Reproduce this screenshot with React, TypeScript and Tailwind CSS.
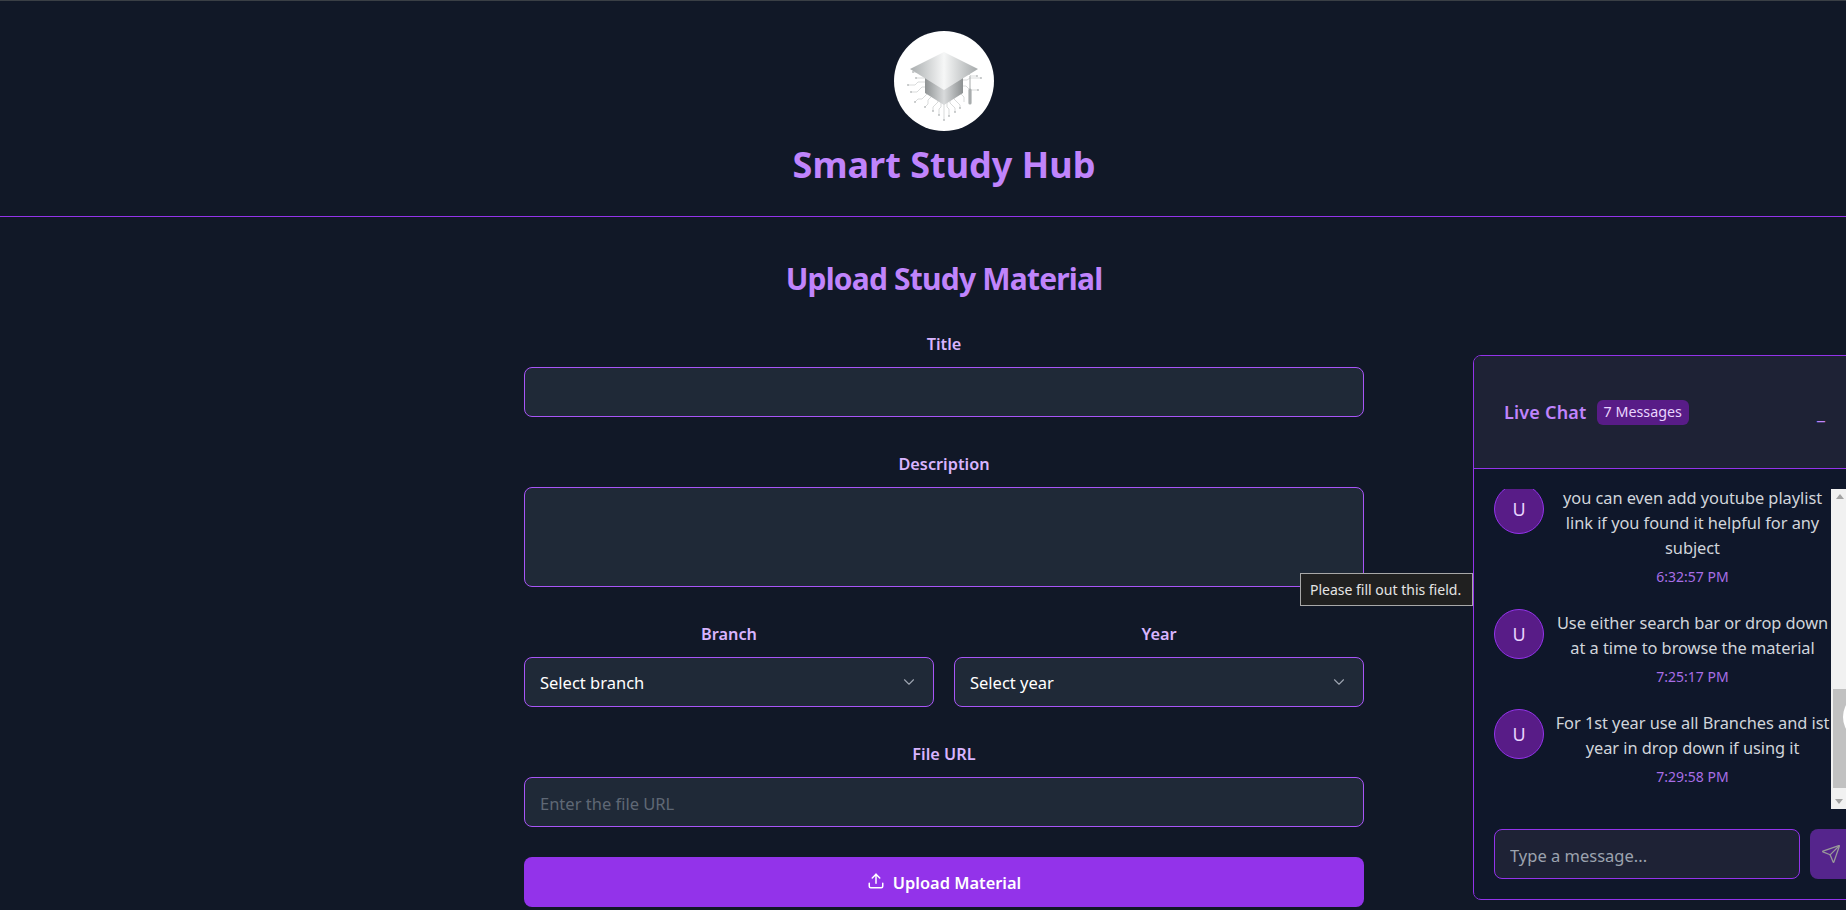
import { ChevronDown, Send, Upload } from "lucide-react";

const font = { fontFamily: '"Noto Sans", "Open Sans", sans-serif' };

function Logo() {
  const traces = [
    "M34 43H26l-2-2h-5","M32 47H22","M32 51H24l-3 3h-7","M34 56H28l-5 5h-6","M36 60l-8 8h-4l-3 3","M40 63l-6 6v4l-3 3","M44 66v5l-5 5v4",
    "M47 68v8l-2 2v6","M50 70v19","M53 68v8l2 2v7","M56 66v6l5 5v4","M60 63v5l6 6v3","M64 60l6 6v5","M68 55h4l4 4h8","M68 49h5l3-2h11","M69 43h6l2 2h6",
  ];
  const dots: [number, number][] = [[19, 41],[22, 47],[14, 54],[17, 61],[21, 71],[31, 76],[39, 80],[45, 84],[50, 89],[55, 85],[61, 81],[66, 77],[84, 59],[87, 47],[83, 45]];
  return (
    <div className="flex h-[100px] w-[100px] items-center justify-center rounded-full bg-white">
      <svg viewBox="0 0 100 100" className="h-[100px] w-[100px]">
        <defs>
          <linearGradient id="capTop" x1="0" x2="1" y1="0" y2="0">
            <stop offset="0" stopColor="#a9adae" />
            <stop offset="0.5" stopColor="#f6f7f7" />
            <stop offset="1" stopColor="#a5a9aa" />
          </linearGradient>
          <linearGradient id="capBase" x1="0" x2="1" y1="0" y2="0">
            <stop offset="0" stopColor="#8f9394" />
            <stop offset="0.5" stopColor="#d9dbdc" />
            <stop offset="1" stopColor="#8c9091" />
          </linearGradient>
        </defs>
        <g fill="none" stroke="#c8cbcc" strokeWidth="0.7">
          {traces.map((d) => (
            <path key={d} d={d} />
          ))}
        </g>
        <g fill="#b8bbbc">
          {dots.map(([x, y]) => (
            <circle key={x + "-" + y} cx={x} cy={y} r="0.9" />
          ))}
        </g>
        <path d="M31 42v20l19 12 19-12V42L50 53Z" fill="url(#capBase)" />
        <path d="M16 38 50 21l34 17-34 21Z" fill="url(#capTop)" />
        <path d="M76 45v14" stroke="#b4b7b8" strokeWidth="1.2" />
        <path d="M76 59v13" stroke="#a8acad" strokeWidth="3.2" strokeLinecap="round" />
      </svg>
    </div>
  );
}

function Field({ label, children }: { label: string; children: React.ReactNode }) {
  return (
    <div className="flex flex-col">
      <label className="mb-[11px] block text-center text-[16.3px] leading-[24px] font-semibold text-[#d8b4fe]">{label}</label>
      {children}
    </div>
  );
}

const box = "h-[50px] w-full rounded-lg border border-[#a855f7] bg-[#1f2937] px-[15px] pt-[2px] text-[16.5px] text-white outline-none";

function SelectBox({ text }: { text: string }) {
  return (
    <div className={box + " flex items-center justify-between"}>
      <span>{text}</span>
      <ChevronDown className="h-[18px] w-[18px] -translate-y-px text-[#9ca3af]" strokeWidth={1.5} />
    </div>
  );
}

function Message({ text, time }: { text: string; time: string }) {
  return (
    <div className="flex items-start gap-[10px]">
      <div className="mt-[1px] flex h-[50px] w-[50px] shrink-0 items-center justify-center rounded-full border border-[#9333ea] bg-[#581c87] text-lg text-[#e9d5ff]">
        U
      </div>
      <div className="w-[277px] shrink-0 pt-[2px] text-center">
        <p className="text-[16.4px] leading-[25px] tracking-[-0.05px] text-[#d1d5db]">{text}</p>
        <p className="mt-[6px] text-sm leading-[21px] text-[#a86ee6]">{time}</p>
      </div>
    </div>
  );
}

export default function App() {
  return (
    <div style={font} className="relative h-[910px] w-full overflow-hidden border-t border-[#3a3f45] bg-[#111827]">
      <div className="w-[1888px]">
        <header className="flex h-[216px] flex-col items-center border-b border-[#9333ea] pt-[30px]">
          <Logo />
          <h1 className="mt-[12px] text-4xl leading-[44px] font-bold text-[#c084fc]">Smart Study Hub</h1>
        </header>

        <main className="mx-auto w-[840px] pt-[39px]">
          <h2 className="text-center text-3xl leading-[45px] font-bold tracking-[-0.8px] text-[#c084fc]">Upload Study Material</h2>
          <form className="mt-[31px] flex flex-col gap-[35px]">
            <Field label="Title">
              <input className={box} />
            </Field>
            <Field label="Description">
              <textarea className={box + " h-[100px] resize-none"} />
            </Field>
            <div className="grid grid-cols-2 gap-5">
              <Field label="Branch">
                <SelectBox text="Select branch" />
              </Field>
              <Field label="Year">
                <SelectBox text="Select year" />
              </Field>
            </div>
            <Field label="File URL">
              <input className={box + " placeholder:text-[#5f6875]"} placeholder="Enter the file URL" />
            </Field>
            <button type="button" className="-mt-[5px] flex h-[50px] w-full items-center justify-center gap-2 rounded-lg bg-[#9333ea] pt-[2px] text-[16.4px] font-semibold text-white">
              <Upload className="h-[18px] w-[18px] -translate-y-[2px]" strokeWidth={2} />
              Upload Material
            </button>
          </form>
        </main>
      </div>

      <div className="absolute top-[572px] left-[1300px] z-10 flex h-[33px] w-[173px] items-center border border-[#a8a8a8] bg-[#202020] pl-[9px] text-sm text-[#e5e5e5]">
        Please fill out this field.
      </div>

      <aside className="absolute top-[354px] left-[1473px] flex h-[545px] w-[400px] flex-col overflow-hidden rounded-lg border border-[#9333ea] bg-[#0f172a]">
        <div className="flex h-[113px] shrink-0 items-center justify-between border-b border-[#9333ea] bg-[#1e2235] pr-[47px] pl-[30px]">
          <div className="flex items-center gap-[10px]">
            <span className="text-lg font-semibold tracking-[0.2px] text-[#c084fc]">Live Chat</span>
            <span className="flex h-[25px] items-center rounded-md bg-[#581c87] px-[7px] text-[14.3px] text-[#e9d5ff]">7 Messages</span>
          </div>
          <span className="text-lg leading-none text-[#c084fc]">_</span>
        </div>
        <div className="relative mt-[20px] h-[320px] shrink-0 overflow-hidden pl-[20px]">
          <div className="-mt-[6px] flex flex-col gap-[21px]">
            <Message text="you can even add youtube playlist link if you found it helpful for any subject" time="6:32:57 PM" />
            <Message text="Use either search bar or drop down at a time to browse the material" time="7:25:17 PM" />
            <Message text="For 1st year use all Branches and ist year in drop down if using it" time="7:29:58 PM" />
          </div>
          <div className="absolute top-0 left-[357px] h-[320px] w-[17px] bg-[#f1f1f1]">
            <div className="mx-auto mt-[5px] h-0 w-0 border-x-[4px] border-b-[5px] border-x-transparent border-b-[#a3a3a3]" />
            <div className="absolute top-[200px] left-[2px] h-[99px] w-[15px] bg-[#c1c1c1]" />
            <div className="absolute bottom-[5px] left-[4px] h-0 w-0 border-x-[4px] border-t-[5px] border-x-transparent border-t-[#a3a3a3]" />
          </div>
          <div className="absolute top-[203px] left-[369px] h-[50px] w-[50px] rounded-full bg-white" />
        </div>
        <div className="flex gap-[10px] pt-[20px] pl-[20px]">
          <input
            className="h-[50px] w-[306px] rounded-lg border border-[#9333ea] bg-[#1e2235] px-[15px] pt-[2px] text-[16.5px] text-white outline-none placeholder:text-[#9ca3af]"
            placeholder="Type a message..."
          />
          <button type="button" className="flex h-[50px] w-[50px] items-center justify-center rounded-lg bg-[#55258c]">
            <Send className="h-5 w-5 -translate-x-1 text-[#9a9a9a]" strokeWidth={1.5} />
          </button>
        </div>
        <div className="absolute bottom-[-1px] left-[-1px] h-[6px] w-[6px] bg-[#0f172a]" />
      </aside>
    </div>
  );
}
